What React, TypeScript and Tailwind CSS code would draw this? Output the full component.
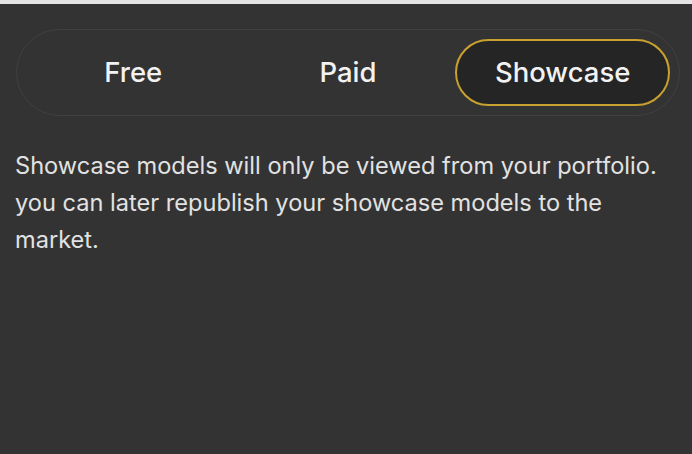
import { useState } from "react";

const options = ["Free", "Paid", "Showcase"];

export default function App() {
  const [selected, setSelected] = useState("Showcase");

  return (
    <div
      className="min-h-[454px] w-full bg-[#333333] border-t-4 border-[#e4e4e4]"
      style={{ fontFamily: "Inter, 'Noto Sans', sans-serif" }}
    >
      <div className="px-4 pt-[25px]">
        {/* Segmented control */}
        <div className="grid grid-cols-3 rounded-full border border-[#404040] p-[9px] w-[664px]">
          {options.map((option) => {
            const active = option === selected;
            return (
              <button
                key={option}
                onClick={() => setSelected(option)}
                className={
                  active
                    ? "h-[67px] rounded-full border-2 border-[#c9a12e] bg-[#252525] text-[27.5px] font-medium text-[#f2f2f2]"
                    : "h-[67px] rounded-full border-2 border-transparent text-[27.5px] font-medium text-[#f2f2f2]"
                }
              >
                {option}
              </button>
            );
          })}
        </div>

        <p className="mt-[31px] -ml-px w-[662px] text-[23.6px] leading-[37px] text-[#e2e2e2]">
          Showcase models will only be viewed from your portfolio. you can later
          republish your showcase models to the market.
        </p>
      </div>
    </div>
  );
}
